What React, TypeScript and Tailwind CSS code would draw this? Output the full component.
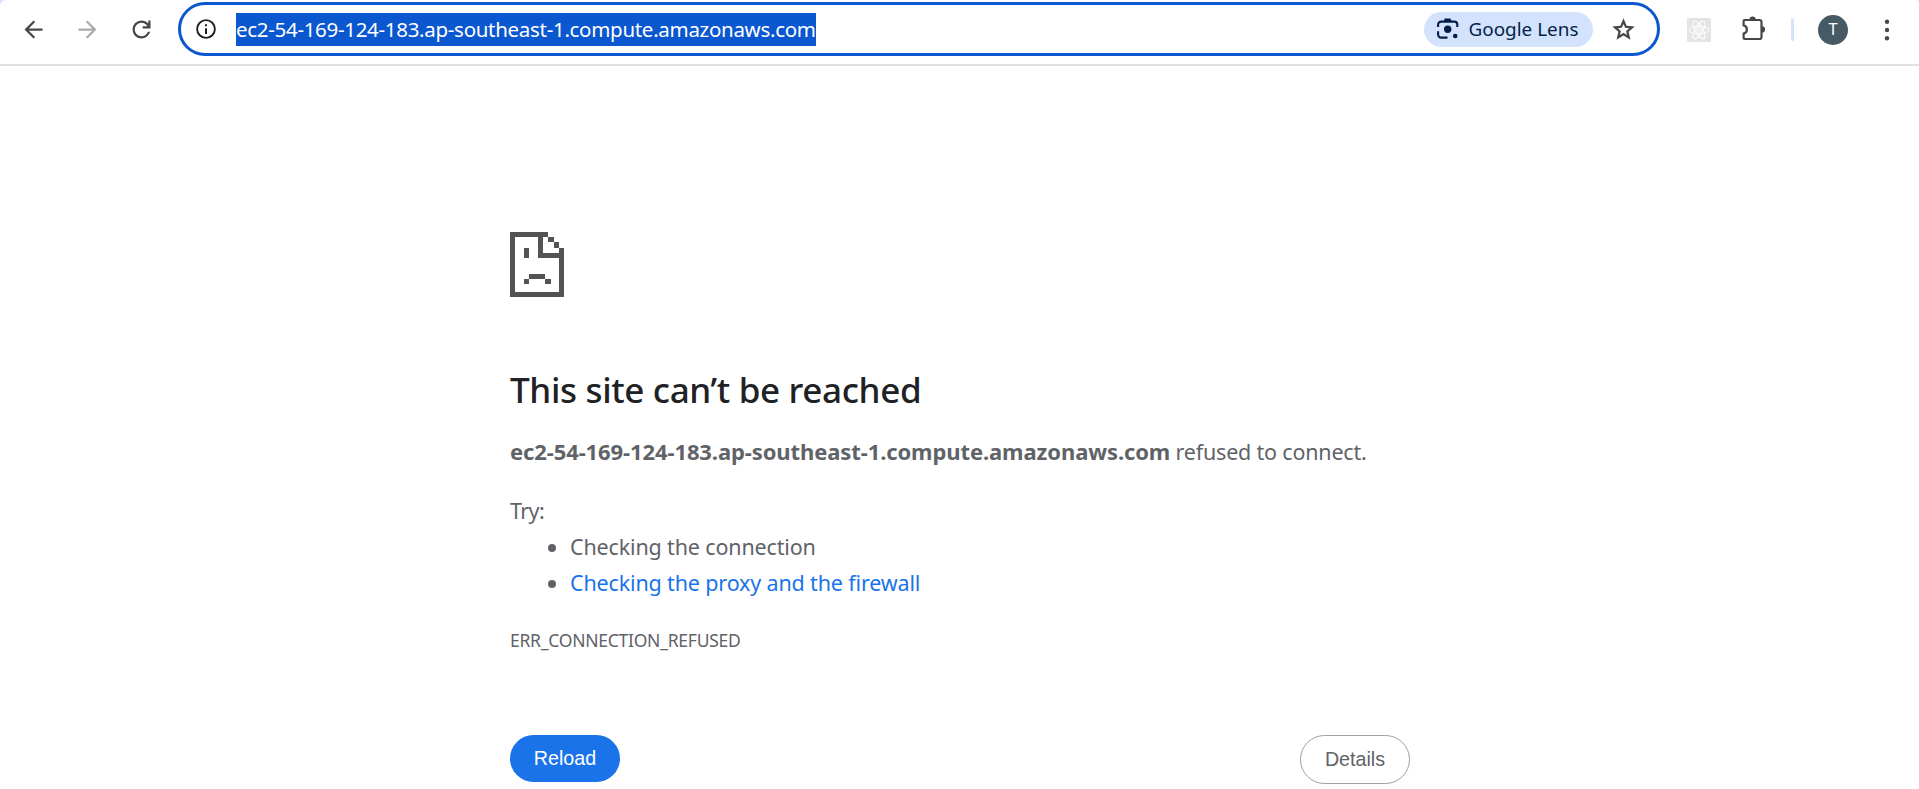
import React from "react";

const HOST = "ec2-54-169-124-183.ap-southeast-1.compute.amazonaws.com";

const ARROW =
  "m7.825 13l5.6 5.6L12 20l-8-8l8-8l1.425 1.4l-5.6 5.6H20v2z";

function Toolbar() {
  return (
    <div className="bg-[#d3e3fd]">
      <header className="flex h-[66px] items-start rounded-tl-[6px] rounded-tr-[3px] border-b-2 border-[#e0e0e0] bg-white">
        <button aria-label="Back" className="mt-4 ml-[19.5px] size-[27px] text-[#474747]">
          <svg viewBox="0 0 24 24" className="size-full" fill="currentColor">
            <path d={ARROW} />
          </svg>
        </button>
        <button aria-label="Forward" className="mt-4 ml-[27px] size-[27px] text-[#ababab]">
          <svg viewBox="0 0 24 24" className="size-full -scale-x-100" fill="currentColor">
            <path d={ARROW} />
          </svg>
        </button>
        <button aria-label="Reload page" className="mt-4 ml-[27px] size-[27px] text-[#474747]">
          <svg viewBox="0 0 24 24" className="size-full" fill="currentColor">
            <path d="M12 20q-3.35 0-5.675-2.325T4 12t2.325-5.675T12 4q1.725 0 3.3.713T18 6.75V4h2v7h-7V9h4.2q-.8-1.4-2.187-2.2T12 6Q9.5 6 7.75 7.75T6 12t1.75 4.25T12 18q1.925 0 3.475-1.1T17.65 14h2.1q-.7 2.65-2.85 4.325T12 20" />
          </svg>
        </button>

        <div className="mt-[2px] ml-[23.5px] flex h-[54px] w-[1482px] shrink-0 items-center rounded-full border-[3px] border-[#0b57d0]">
          <svg viewBox="0 0 20 20" className="ml-[14.5px] size-5 shrink-0" fill="none" stroke="#1f1f1f">
            <circle cx="10" cy="10" r="8.9" strokeWidth="1.9" />
            <path d="M10 9.2V15" strokeWidth="2" />
            <path d="M10 5.2v2" strokeWidth="2" />
          </svg>
          <div className="ml-[20.5px] flex h-[33px] w-[580px] items-center bg-[#0b57d0] font-['Noto_Sans',sans-serif] text-[20.5px] tracking-[-0.3px] whitespace-nowrap text-white">
            <span>{HOST}</span>
          </div>
          <div className="ml-auto flex h-[35px] w-[169px] items-center rounded-full bg-[#d3e3fd] text-[#041e49]">
            <svg viewBox="0 0 22 22" className="ml-[13px] size-[22px]" fill="none" stroke="currentColor">
              <path d="M1.1 9V6.6a3 3 0 0 1 3-3h13.2a3 3 0 0 1 3 3V9M1.1 13.2v3.4a3 3 0 0 0 3 3H10.5" strokeWidth="2.1" />
              <path d="M6.3 3.8 7.8.6h5.6l1.5 3.2z" fill="currentColor" stroke="none" />
              <circle cx="10.7" cy="11.3" r="3.7" fill="currentColor" stroke="none" />
              <circle cx="18.2" cy="18" r="2.3" fill="currentColor" stroke="none" />
            </svg>
            <span className="ml-[9.5px] pt-px font-['Noto_Sans',sans-serif] text-[18.9px] whitespace-nowrap">Google Lens</span>
          </div>
          <svg viewBox="0 0 24 24" className="mr-[20.5px] ml-[16.5px] size-[27px]" fill="#474747">
            <path d="m8.85 16.825l3.15-1.9l3.15 1.925l-.825-3.6l2.775-2.4l-3.65-.325l-1.45-3.4l-1.45 3.375l-3.65.325l2.775 2.425zM5.825 21l1.625-7.025L2 9.25l7.2-.625L12 2l2.8 6.625l7.2.625l-5.45 4.725L18.175 21L12 17.275z" />
          </svg>
        </div>

        <svg viewBox="0 0 24 24" className="mt-[17.5px] ml-[26.5px] size-6 shrink-0" fill="none" stroke="#fff">
          <rect width="24" height="24" rx="1.5" fill="#e4e4e4" stroke="none" />
          <g strokeWidth="1">
            <ellipse cx="12" cy="12" rx="10" ry="3.9" />
            <ellipse cx="12" cy="12" rx="10" ry="3.9" transform="rotate(60 12 12)" />
            <ellipse cx="12" cy="12" rx="10" ry="3.9" transform="rotate(120 12 12)" />
            <circle cx="12" cy="12" r="2.2" />
          </g>
        </svg>
        <svg viewBox="0 0 26 26" className="mt-[15px] ml-[30.5px] size-[26px] shrink-0" fill="none" stroke="#474747">
          <path d="M3.6 5H18.5a2 2 0 0 1 2 2V22a2 2 0 0 1-2 2H3.6a1 1 0 0 1-1-1V18.6a4.2 4.2 0 0 0 0-8.2V6a1 1 0 0 1 1-1z" strokeWidth="2.2" />
          <path d="M8.5 4.5a3.1 3.1 0 0 1 6.2 0zM21 11.3a3.1 3.1 0 0 1 0 6.2z" fill="#474747" stroke="none" />
        </svg>
        <div className="mt-[18px] ml-[24px] h-[23px] w-[3px] rounded-full bg-[#d3e3fd]" />
        <div className="mt-[15px] ml-6 flex size-[30px] shrink-0 items-center justify-center rounded-full bg-[#455a64] font-[Roboto,sans-serif] text-[16px] text-white">
          T
        </div>
        <svg viewBox="0 0 6 24" className="mt-[17.5px] ml-[36px] h-6 w-1.5 shrink-0" fill="#474747">
          <circle cx="3" cy="3.7" r="2.2" />
          <circle cx="3" cy="12" r="2.2" />
          <circle cx="3" cy="20.3" r="2.2" />
        </svg>
      </header>
    </div>
  );
}

function SadPage() {
  return (
    <svg viewBox="0 0 54 65" className="h-[65px] w-[54px]" fill="#535353" shapeRendering="crispEdges">
      <path d="M0 0H38V5H5V60H49V26H28V5H33V21H49V16H54V65H0z" />
      <path d="M38 5H43.5V10H38zM43.5 10H49V16H43.5z" />
      <path d="M13.5 16H19V26H13.5zM19 42H35V47H19zM13.5 47H19V52H13.5zM35 47H40.5V52H35z" />
    </svg>
  );
}

export default function App() {
  return (
    <div className="h-[789px] overflow-hidden bg-white">
      <Toolbar />
      <main className="ml-[510px] w-[900px] pt-[166px] font-['Noto_Sans',sans-serif] text-[21.5px] leading-9 text-[#5f6368]">
        <SadPage />
        <h1 className="mt-[71px] text-[35px] leading-[43px] font-medium tracking-[-0.34px] whitespace-nowrap text-[#202124]">
          This site can’t be reached
        </h1>
        <p className="mt-[23px] whitespace-nowrap">
          <strong className="text-[22px] leading-none font-bold tracking-[-0.1px]">{HOST}</strong>
          <span className="tracking-[-0.2px]"> refused to connect.</span>
        </p>
        <p className="mt-[23px] tracking-[-0.6px]">Try:</p>
        <ul className="list-disc pl-[60px] tracking-[-0.15px]">
          <li>Checking the connection</li>
          <li>
            <a className="text-[#1a73e8]">Checking the proxy and the firewall</a>
          </li>
        </ul>
        <div className="mt-[25px] text-[17.5px] leading-[29px] tracking-[-0.25px]">ERR_CONNECTION_REFUSED</div>
        <div className="mt-[80px] flex items-start justify-between font-['Liberation_Sans',sans-serif] text-[19.7px]">
          <button className="h-[47px] w-[110px] rounded-full bg-[#1a73e8] pb-[2px] text-white">Reload</button>
          <button className="h-[49px] w-[110px] rounded-full border border-[#9aa0a6] pb-[2px] text-[#5f6368]">Details</button>
        </div>
      </main>
    </div>
  );
}
